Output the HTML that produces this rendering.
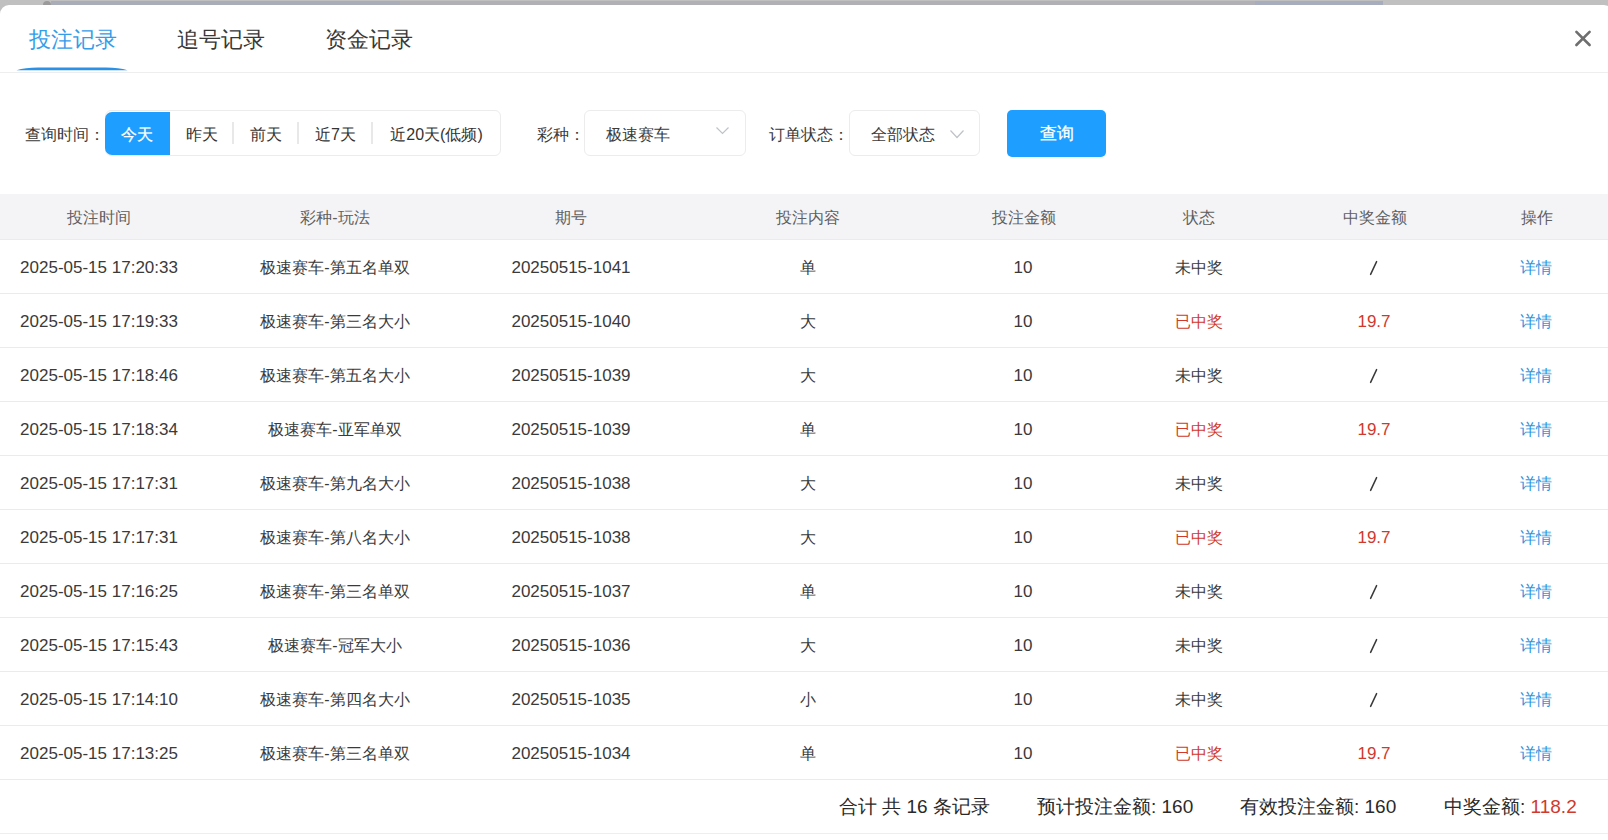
<!DOCTYPE html>
<html><head><meta charset="utf-8">
<style>
*{box-sizing:border-box;margin:0;padding:0}
html,body{width:1608px;height:840px;overflow:hidden;background:#c0c0c0;font-family:"Liberation Sans",sans-serif;color:#333}
.strip{position:absolute;left:51px;top:1px;width:349px;height:4px;background:#a9adb8}
.knob{position:absolute;left:43px;top:1px;width:8px;height:8px;border-radius:4px;background:#9a9a9a}
.modal{position:absolute;left:0;top:5px;width:1613px;height:840px;background:#fff;border-radius:9px 9px 0 0}
.a{position:absolute;white-space:nowrap}
.tab{position:absolute;top:24px;font-size:22px;line-height:32px;color:#383838}
.tab.on{color:#349de9}
.uline{position:absolute;left:17px;top:67px;width:110px;height:3px;border-radius:40px 40px 0 0/3px 3px 0 0;background:#2289de}
.hdiv{position:absolute;left:0;top:72px;width:1608px;height:1px;background:#eeeeee}
.lbl{position:absolute;top:123px;font-size:16px;line-height:24px;color:#3a3a3a}
.grp{position:absolute;left:105px;top:110px;width:396px;height:46px;border:1px solid #ececec;border-radius:6px}
.seg{position:absolute;top:111px;height:44px;line-height:47px;font-size:16px;text-align:center;color:#333}
.seg.on{top:112px;height:43px;line-height:45px;background:#1e9fff;color:#fff;border-radius:7px 0 0 7px;-webkit-text-stroke:0.25px #fff;text-indent:-2px}
.sep{position:absolute;top:122px;width:2px;height:22px;background:#e8e8e8}
.sel{position:absolute;top:110px;height:46px;border:1px solid #ececec;border-radius:6px}
.btn{position:absolute;left:1007px;top:110px;width:99px;height:47px;border-radius:5px;background:#1e9fff;color:#fff;font-size:16.5px;-webkit-text-stroke:0.3px #fff;line-height:47px;text-align:center}
.thead{position:absolute;left:0;top:194px;width:1608px;height:46px;background:#f4f4f7;border-bottom:1px solid #eaeaef}
.th{position:absolute;top:206px;width:240px;margin-left:-120px;text-align:center;font-size:16px;line-height:24px;color:#5f5f5f}
.row{position:absolute;left:0;width:1608px;height:54px;border-bottom:1px solid #ebebeb}
.td{position:absolute;top:1px;width:240px;margin-left:-120px;height:53px;line-height:53px;text-align:center;font-size:16px;color:#3a3a3a}
.n{font-size:17px}
.red{color:#cf3a2d}
.lnk{color:#2e95de}
.foot{position:absolute;top:794px;font-size:19px;line-height:26px;color:#2a2a2a}
.fline{position:absolute;left:0;top:833px;width:1608px;height:1px;background:#eceef2}
</style></head><body>
<div class="strip"></div><div class="strip" style="left:400px;width:855px;background:#b1b1b5"></div><div class="strip" style="left:1255px;width:128px;background:#a7adbc"></div><div class="knob"></div>
<div class="modal"></div>

<div class="tab on" style="left:29px">投注记录</div>
<div class="tab" style="left:177px">追号记录</div>
<div class="tab" style="left:325px">资金记录</div>
<svg class="a" style="left:16px;top:66px" width="112" height="6" viewBox="0 0 112 6"><path d="M0.5 4.3Q9 1.6 22 1.6L90 1.6Q103 1.6 111.5 4.3Z" fill="#2a91e6"/></svg>
<div class="hdiv"></div>
<svg class="a" style="left:1574px;top:29px" width="18" height="18" viewBox="0 0 18 18"><path d="M2.4 2.8L15.6 16M15.6 2.8L2.4 16" stroke="#6e6e6e" stroke-width="2.6" stroke-linecap="round"/></svg>

<div class="lbl" style="left:25px">查询时间：</div>
<div class="grp"></div>
<div class="seg on" style="left:105px;width:65px">今天</div>
<div class="seg" style="left:170px;width:63px">昨天</div>
<div class="sep" style="left:232px"></div>
<div class="seg" style="left:234px;width:63px">前天</div>
<div class="sep" style="left:297px"></div>
<div class="seg" style="left:299px;width:73px">近7天</div>
<div class="sep" style="left:371px"></div>
<div class="seg" style="left:373px;width:127px">近20天(低频)</div>

<div class="lbl" style="left:537px">彩种：</div>
<div class="sel" style="left:584px;width:162px"></div>
<div class="lbl" style="left:606px">极速赛车</div>
<svg class="a" style="left:715px;top:126px" width="15" height="10" viewBox="0 0 15 10"><path d="M1.5 1.5L7.5 7.5L13.5 1.5" fill="none" stroke="#bfc2c8" stroke-width="1.2"/></svg>

<div class="lbl" style="left:769px">订单状态：</div>
<div class="sel" style="left:849px;width:131px"></div>
<div class="lbl" style="left:871px">全部状态</div>
<svg class="a" style="left:949px;top:129px" width="16" height="11" viewBox="0 0 16 11"><path d="M1.5 1.5L8 8.5L14.5 1.5" fill="none" stroke="#bfc2c8" stroke-width="1.2"/></svg>

<div class="btn">查询</div>

<div class="thead"></div>
<div class="th" style="left:99px">投注时间</div>
<div class="th" style="left:335px">彩种-玩法</div>
<div class="th" style="left:571px">期号</div>
<div class="th" style="left:808px">投注内容</div>
<div class="th" style="left:1024px">投注金额</div>
<div class="th" style="left:1199px">状态</div>
<div class="th" style="left:1375px">中奖金额</div>
<div class="th" style="left:1537px">操作</div>

<div id="rows">
<div class="row" style="top:240px"><div class="td" style="left:99px"><span class="n">2025-05-15 17:20:33</span></div><div class="td" style="left:335px">极速赛车-第五名单双</div><div class="td" style="left:571px"><span class="n">20250515-1041</span></div><div class="td" style="left:808px">单</div><div class="td" style="left:1023px"><span class="n">10</span></div><div class="td" style="left:1199px">未中奖</div><div class="td" style="left:1536px"><span class="lnk">详情</span></div><svg class="a" style="left:1369px;top:20px" width="9" height="16" viewBox="0 0 9 16"><path d="M7.6 1.6L1.6 14.4" stroke="#3a3a3a" stroke-width="1.5" stroke-linecap="round"/></svg></div>
<div class="row" style="top:294px"><div class="td" style="left:99px"><span class="n">2025-05-15 17:19:33</span></div><div class="td" style="left:335px">极速赛车-第三名大小</div><div class="td" style="left:571px"><span class="n">20250515-1040</span></div><div class="td" style="left:808px">大</div><div class="td" style="left:1023px"><span class="n">10</span></div><div class="td" style="left:1199px"><span class="red">已中奖</span></div><div class="td" style="left:1374px"><span class="red n">19.7</span></div><div class="td" style="left:1536px"><span class="lnk">详情</span></div></div>
<div class="row" style="top:348px"><div class="td" style="left:99px"><span class="n">2025-05-15 17:18:46</span></div><div class="td" style="left:335px">极速赛车-第五名大小</div><div class="td" style="left:571px"><span class="n">20250515-1039</span></div><div class="td" style="left:808px">大</div><div class="td" style="left:1023px"><span class="n">10</span></div><div class="td" style="left:1199px">未中奖</div><div class="td" style="left:1536px"><span class="lnk">详情</span></div><svg class="a" style="left:1369px;top:20px" width="9" height="16" viewBox="0 0 9 16"><path d="M7.6 1.6L1.6 14.4" stroke="#3a3a3a" stroke-width="1.5" stroke-linecap="round"/></svg></div>
<div class="row" style="top:402px"><div class="td" style="left:99px"><span class="n">2025-05-15 17:18:34</span></div><div class="td" style="left:335px">极速赛车-亚军单双</div><div class="td" style="left:571px"><span class="n">20250515-1039</span></div><div class="td" style="left:808px">单</div><div class="td" style="left:1023px"><span class="n">10</span></div><div class="td" style="left:1199px"><span class="red">已中奖</span></div><div class="td" style="left:1374px"><span class="red n">19.7</span></div><div class="td" style="left:1536px"><span class="lnk">详情</span></div></div>
<div class="row" style="top:456px"><div class="td" style="left:99px"><span class="n">2025-05-15 17:17:31</span></div><div class="td" style="left:335px">极速赛车-第九名大小</div><div class="td" style="left:571px"><span class="n">20250515-1038</span></div><div class="td" style="left:808px">大</div><div class="td" style="left:1023px"><span class="n">10</span></div><div class="td" style="left:1199px">未中奖</div><div class="td" style="left:1536px"><span class="lnk">详情</span></div><svg class="a" style="left:1369px;top:20px" width="9" height="16" viewBox="0 0 9 16"><path d="M7.6 1.6L1.6 14.4" stroke="#3a3a3a" stroke-width="1.5" stroke-linecap="round"/></svg></div>
<div class="row" style="top:510px"><div class="td" style="left:99px"><span class="n">2025-05-15 17:17:31</span></div><div class="td" style="left:335px">极速赛车-第八名大小</div><div class="td" style="left:571px"><span class="n">20250515-1038</span></div><div class="td" style="left:808px">大</div><div class="td" style="left:1023px"><span class="n">10</span></div><div class="td" style="left:1199px"><span class="red">已中奖</span></div><div class="td" style="left:1374px"><span class="red n">19.7</span></div><div class="td" style="left:1536px"><span class="lnk">详情</span></div></div>
<div class="row" style="top:564px"><div class="td" style="left:99px"><span class="n">2025-05-15 17:16:25</span></div><div class="td" style="left:335px">极速赛车-第三名单双</div><div class="td" style="left:571px"><span class="n">20250515-1037</span></div><div class="td" style="left:808px">单</div><div class="td" style="left:1023px"><span class="n">10</span></div><div class="td" style="left:1199px">未中奖</div><div class="td" style="left:1536px"><span class="lnk">详情</span></div><svg class="a" style="left:1369px;top:20px" width="9" height="16" viewBox="0 0 9 16"><path d="M7.6 1.6L1.6 14.4" stroke="#3a3a3a" stroke-width="1.5" stroke-linecap="round"/></svg></div>
<div class="row" style="top:618px"><div class="td" style="left:99px"><span class="n">2025-05-15 17:15:43</span></div><div class="td" style="left:335px">极速赛车-冠军大小</div><div class="td" style="left:571px"><span class="n">20250515-1036</span></div><div class="td" style="left:808px">大</div><div class="td" style="left:1023px"><span class="n">10</span></div><div class="td" style="left:1199px">未中奖</div><div class="td" style="left:1536px"><span class="lnk">详情</span></div><svg class="a" style="left:1369px;top:20px" width="9" height="16" viewBox="0 0 9 16"><path d="M7.6 1.6L1.6 14.4" stroke="#3a3a3a" stroke-width="1.5" stroke-linecap="round"/></svg></div>
<div class="row" style="top:672px"><div class="td" style="left:99px"><span class="n">2025-05-15 17:14:10</span></div><div class="td" style="left:335px">极速赛车-第四名大小</div><div class="td" style="left:571px"><span class="n">20250515-1035</span></div><div class="td" style="left:808px">小</div><div class="td" style="left:1023px"><span class="n">10</span></div><div class="td" style="left:1199px">未中奖</div><div class="td" style="left:1536px"><span class="lnk">详情</span></div><svg class="a" style="left:1369px;top:20px" width="9" height="16" viewBox="0 0 9 16"><path d="M7.6 1.6L1.6 14.4" stroke="#3a3a3a" stroke-width="1.5" stroke-linecap="round"/></svg></div>
<div class="row" style="top:726px"><div class="td" style="left:99px"><span class="n">2025-05-15 17:13:25</span></div><div class="td" style="left:335px">极速赛车-第三名单双</div><div class="td" style="left:571px"><span class="n">20250515-1034</span></div><div class="td" style="left:808px">单</div><div class="td" style="left:1023px"><span class="n">10</span></div><div class="td" style="left:1199px"><span class="red">已中奖</span></div><div class="td" style="left:1374px"><span class="red n">19.7</span></div><div class="td" style="left:1536px"><span class="lnk">详情</span></div></div>
</div>

<div class="foot" style="left:839px">合计 共 16 条记录</div>
<div class="foot" style="left:1037px">预计投注金额: 160</div>
<div class="foot" style="left:1240px">有效投注金额: 160</div>
<div class="foot" style="left:1444px">中奖金额: <span class="red">118.2</span></div>
<div class="fline"></div>
</body></html>
